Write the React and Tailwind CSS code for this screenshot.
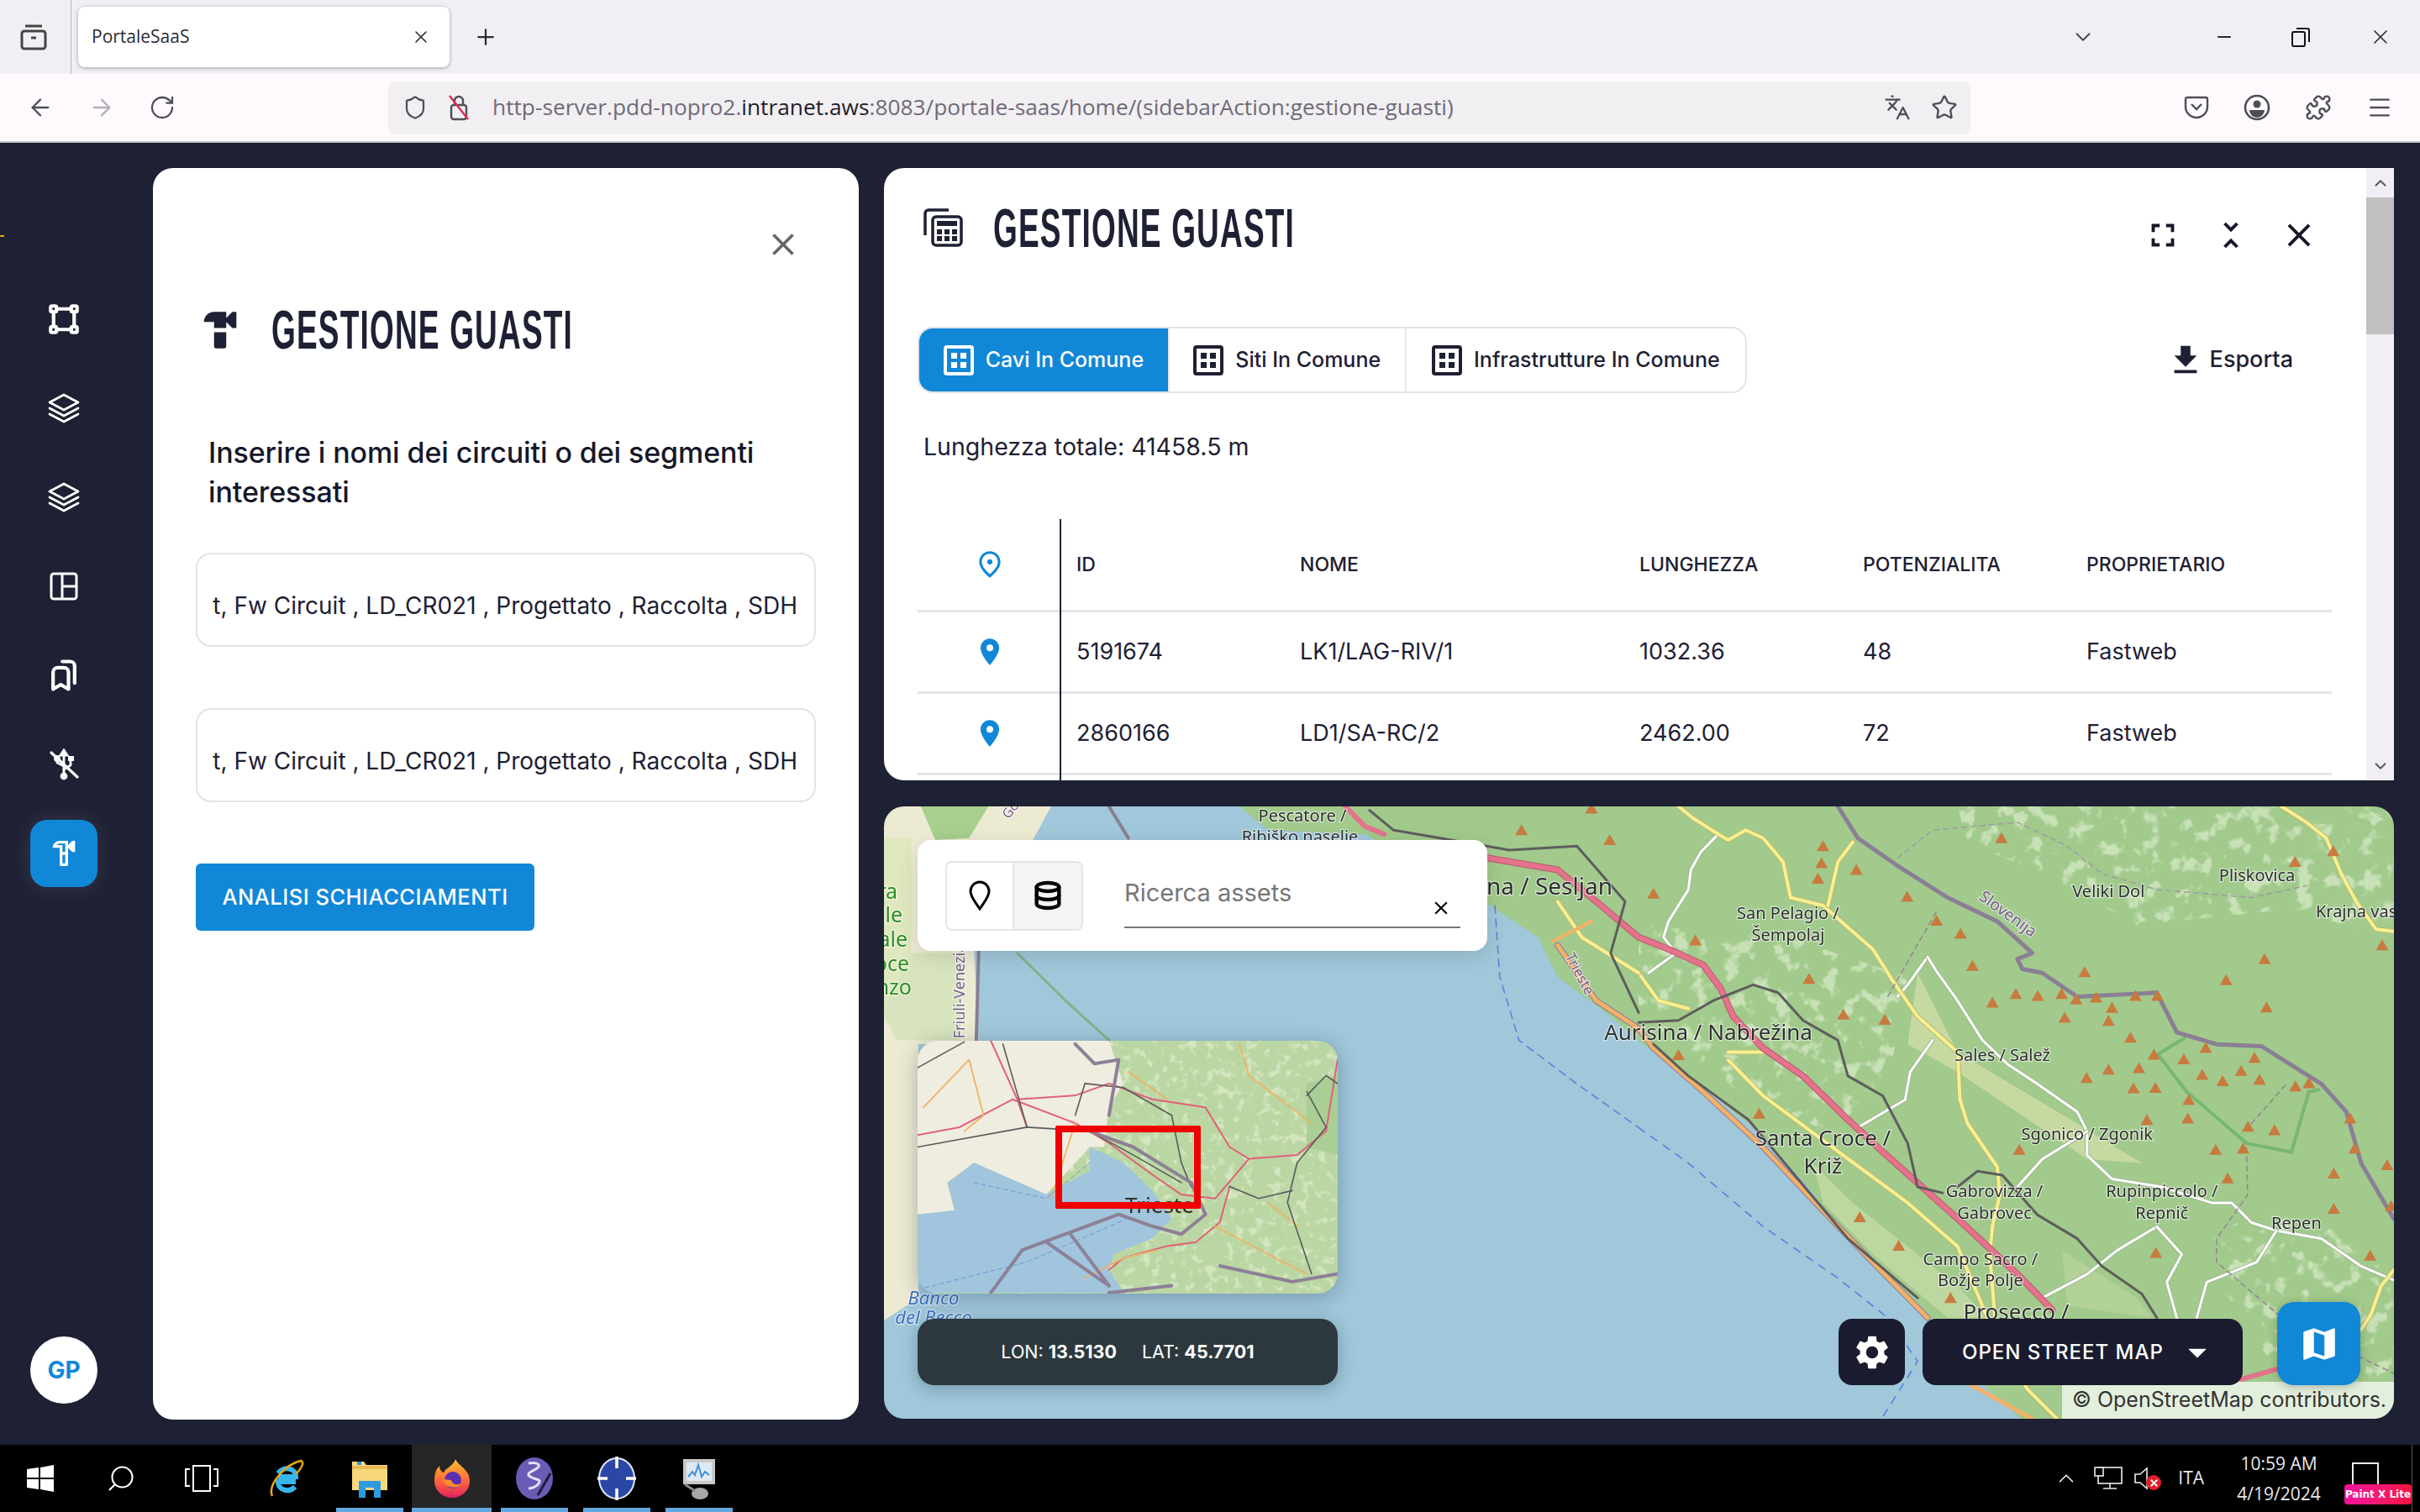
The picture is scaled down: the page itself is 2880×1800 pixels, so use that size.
import {
  MdHardware, MdOutlineHardware, MdClose, MdFullscreen, MdUnfoldLess, MdFileDownload, MdPlace, MdOutlinePlace,
  MdSettings, MdMap, MdArrowDropDown,
} from 'react-icons/md';
import { TbVector, TbBookmarks, TbDatabase } from 'react-icons/tb';
import { ArrowLeft, ArrowRight, RotateCw, Shield, Star, Puzzle, Menu, Languages, Plus, X, ChevronDown, Minus, Search, ChevronUp } from 'lucide-react';

// map drawing helpers: points are read off the zoomed crops and scaled back to map pixels
const conv = (s, ox, sx, oy = 0, sy = 2.119) =>
  s.trim().split(/\s+/).map((p) => {
    const [x, y] = p.split(',').map(Number);
    return `${(ox + x / sx).toFixed(1)},${(oy + y / sy).toFixed(1)}`;
  }).join(' ');
const z6 = (s) => conv(s, 898, 1.686);
const z5 = (s) => conv(s, -2, 1.742);
const mm = (s) => conv(s, -42, 1.742, -279.4);

const triangles = '728,80 370,100 367,143 437,160 360,182 30,220 539,228 1317,140 1394,113 598,288 646,321 114,338 1492,350 670,402 895,418 1256,385 1179,438 342,435 757,473 801,478 849,473 710,495 878,487 918,482 997,478 1041,478 950,508 1260,507 855,533 943,541 411,525 494,538 987,583 1138,609 1034,626 1094,638 1236,634 80,627 1004,660 943,664 899,685 1131,677 1209,667 1172,693 1246,689 993,711 1037,710 1318,706 1345,698 1104,740 1102,787 1020,791 1428,787 242,775 1223,808 1276,817 764,866 1158,866 1213,863 1437,863 1502,905 1395,926 1182,938 1395,1015 1510,1008 444,1036 522,1108 1038,1126 1468,1133 626,1240';

const labels = [
  ['Pliskovica', 1241, 178, 20], ['Veliki Dol', 943, 218, 20], ['Krajna vas', 1440, 268, 20],
  ['San Pelagio /', 300, 273, 20], ['Šempolaj', 300, 327, 20],
  ['Sales / Salež', 730, 631, 20], ['Santa Croce /', 370, 842, 26], ['Križ', 370, 912, 26],
  ['Sgonico / Zgonik', 900, 830, 20], ['Gabrovizza /', 714, 975, 20], ['Gabrovec', 714, 1030, 20],
  ['Rupinpiccolo /', 1050, 975, 20], ['Repnič', 1050, 1030, 20], ['Repen', 1320, 1055, 20],
  ['Campo Sacro /', 686, 1145, 20], ['Božje Polje', 686, 1198, 20], ['Prosecco /', 758, 1280, 26],
];

const Line = ({ pts, color, w, casing, dash }) => (
  <>
    {casing && <polyline points={pts} fill="none" stroke={casing} strokeWidth={w + 2} strokeLinejoin="round" strokeLinecap="round" />}
    <polyline points={pts} fill="none" stroke={color} strokeWidth={w} strokeLinejoin="round" strokeLinecap="round" strokeDasharray={dash} />
  </>
);

const Label = ({ x, y, size, children, fill = '#2f2f2f', anchor = 'middle', ...rest }) => (
  <text x={x} y={y} fontSize={size} fill={fill} textAnchor={anchor} stroke="#ffffff" strokeOpacity="0.55" strokeWidth="2.5" paintOrder="stroke" fontFamily="'Noto Sans', sans-serif" dominantBaseline="middle" {...rest}>
    {children}
  </text>
);

// mottled woodland texture for the land areas
const Mottle = ({ id, freq, seed, cut }) => (
  <filter id={id} x="0" y="0" width="100%" height="100%">
    <feTurbulence type="fractalNoise" baseFrequency={freq} numOctaves="3" seed={seed} />
    <feColorMatrix type="matrix" values={`0 0 0 0 0.78  0 0 0 0 0.88  0 0 0 0 0.66  0 0 0 ${cut} ${-cut * 0.55}`} />
  </filter>
);

const MapCanvas = () => (
  <svg className="absolute inset-0 block blur-[0.5px]" width="1797" height="729" viewBox="0 0 1797 729">
    <defs>
      <Mottle id="mottle" freq="0.05" seed="4" cut="7" />
      <clipPath id="woods">
        <path d={`M${z6('640,0 1515,0 1515,330 1300,260 1000,300 830,180 660,90')}Z M${z6('1150,1060 1350,1030 1515,1180 1515,1450 1300,1450 1180,1250')}Z M${z6('0,300 300,330 540,430 500,700 380,820 200,720 0,520')}Z`} />
      </clipPath>
    </defs>
    <rect width="1797" height="729" fill="#a1ca8c" />
    <rect width="1797" height="729" filter="url(#mottle)" clipPath="url(#woods)" opacity="0.6" />
    {/* left plain and lagoon */}
    <polygon points={z5('0,0 350,0 350,400 200,600 75,600 75,1240 0,1300')} fill="#ecead3" />
    <polygon points={z5('80,0 220,0 180,80 110,85')} fill="#a8cf8e" />
    <polygon points={z5('0,80 60,80 60,380 0,520')} fill="#dfe7c0" />
    <polygon points={z5('60,370 170,370 160,590 30,590 0,520')} fill="#d8e4bd" />
    {/* lighter fields */}
    <polygon points={z6('560,420 640,620 880,800 1010,900 900,890 640,670 540,600')} fill="#c6d9a0" />
    <polygon points={z6('350,900 430,1000 640,1210 700,1290 620,1290 470,1130 370,1000')} fill="#bcd79f" />
    <polygon points={z6('850,1120 1000,1240 1030,1290 860,1260')} fill="#b2d29a" />
    {/* sea */}
    <polygon points={`${z5('350,0 740,0 800,60 1000,70 1260,250 1360,330 1400,430 1500,520')} ${z6('0,590 50,640 120,700 230,810 340,960 400,1060 500,1200 580,1290 640,1400 780,1560')} ${z5('0,1560 0,1300 75,1240 75,600 200,600 190,360')}`} fill="#a0c7da" />
    {/* sea borders */}
    <Line pts={z5('1270,250 1280,430 1320,590 1440,700 1568,810')} color="#5b7fd6" w={1.5} dash="9 7" />
    <Line pts={z6('0,810 100,900 250,1060 400,1190 500,1290 560,1400 490,1540')} color="#4f7fdd" w={1.5} dash="9 9" />
    <Line pts={z5('280,370 380,490 470,590')} color="#7fb48a" w={3} />
    <Line pts={z5('470,0 510,80')} color="#8a7f95" w={4} />
    <Line pts={z5('200,360 195,590')} color="#8a7f95" w={4} />
    {/* orange coast road */}
    <Line pts={`${z5('1400,350 1480,490 1568,560')} ${z6('30,610 130,720 250,860 370,1020 470,1150 580,1290')}`} color="#f3b166" w={5} casing="#8d7aa0" />
    <Line pts={z6('640,1440 790,1545')} color="#f3b166" w={5} />
    {/* white roads */}
    {['160,70 125,115 105,160 100,210 60,290 50,330 75,370 20,420',
      '580,380 540,450 520,480', '580,380 600,420 640,490 690,590 740,650 800,700 880,770 900,820 900,880 950,940 1050,960 1150,1000 1190,1000 1230,1050 1280,1070 1370,1090 1450,1160 1515,1195',
      '590,590 545,670 535,740 440,810', '900,820 810,890 760,960', '1040,1060 960,1120 900,1180 810,1240',
      '1040,1060 1090,1130 1060,1200 1080,1290', '1280,1070 1240,1150 1140,1200 1120,1290'].map((p) => (
      <Line key={p} pts={z6(p)} color="#ffffff" w={3} casing="#9fb88f" />
    ))}
    {/* yellow roads */}
    {['80,0 110,30 160,70 180,85 215,60 250,80 290,140 305,230 370,250 470,360 510,440 560,530 640,620 645,740 660,800 720,910 725,980 710,1060 705,1130 715,1290',
      '430,90 400,140 380,250', '0,420 40,490 100,510', '180,620 250,620', '180,640 250,730 400,870 540,1000 640,1110 700,1290 780,1470 840,1545',
      '1290,0 1340,40 1380,80 1410,170 1440,240 1480,310 1515,315', '1515,1170 1490,1210 1470,1280 1450,1320'].map((p) => (
      <Line key={p} pts={z6(p)} color="#f6f08f" w={4} casing="#b9b873" />
    ))}
    <Line pts={z5('1400,240 1450,330 1568,420')} color="#f6f08f" w={4} casing="#b9b873" />
    <Line pts={z5('1390,340 1470,290')} color="#f3b166" w={4} />
    {/* motorway */}
    <Line pts={`${z5('1254,130 1400,160 1490,250 1568,330')} ${z6('0,330 60,360 130,400 165,460 190,530 250,610 330,680 420,790 480,860 560,950 640,1040 700,1110 760,1180 830,1270')}`} color="#e4738b" w={6} casing="#b85a6e" />
    <Line pts={z6('1210,1445 1280,1420')} color="#e4738b" w={6} />
    <Line pts={z5('960,0 1000,50 1040,70')} color="#e4738b" w={6} />
    {/* railways */}
    {['0,545 80,540 150,490 230,450 280,470 330,540 400,590 420,680 490,730 540,850 560,960 610,975',
      '640,960 680,920 730,930 800,1030 880,1090 930,1160 1010,1230 1040,1290', '30,600 100,680 220,790 340,970 420,1090 560,1240'].map((p) => (
      <Line key={p} pts={z6(p)} color="#5d5d5d" w={3} />
    ))}
    <Line pts={z5('1010,10 1060,60 1300,110 1440,100 1540,240 1510,370 1568,520')} color="#5d5d5d" w={3} />
    {/* park and border */}
    <Line pts={z6('1095,585 1042,625 1100,720 1220,850 1310,872 1345,720 1365,715')} color="#78b673" w={4} />
    <Line pts={z6('400,0 440,80 520,150 620,230 720,290 790,370 760,385 770,410 810,420 880,480 1040,470 1080,570 1160,600 1250,605 1370,700 1420,770 1450,900 1515,1040')} color="#8a7f95" w={5} />
    <Line pts={z6('520,130 590,60 760,40 860,100 930,170 1040,210 1230,230 1340,200')} color="#9f9aa0" w={1.5} dash="6 5" />
    <Line pts={z6('1220,860 1222,980 1160,1090 1160,1150 1300,1300 1515,1430')} color="#96848f" w={1.5} dash="6 5" />
    <Line pts={z6('500,480 600,260')} color="#96848f" w={1.5} dash="6 5" />
    <Line pts={z6('1230,800 1300,700')} color="#96848f" w={1.5} dash="6 5" />
    {/* peaks */}
    {triangles.split(' ').map((p) => {
      const [x, y] = p.split(',').map(Number);
      const cx = 898 + x / 1.686;
      const cy = y / 2.119;
      return <polygon key={p} points={`${cx},${cy - 7} ${cx + 7.5},${cy + 6} ${cx - 7.5},${cy + 6}`} fill="#c97a3f" />;
    })}
    {z5('1325,60 1508,85 1470,5').split(' ').map((p) => {
      const [cx, cy] = p.split(',').map(Number);
      return <polygon key={p} points={`${cx},${cy - 7} ${cx + 7.5},${cy + 6} ${cx - 7.5},${cy + 6}`} fill="#c97a3f" />;
    })}
    {labels.map(([t, x, y, s]) => (
      <Label key={t} x={898 + x / 1.686} y={y / 2.119} size={s}>{t}</Label>
    ))}
    <Label x={981} y={271} size={26}>Aurisina / Nabrežina</Label>
    <Label x={867} y={97} size={28} anchor="end">Sistiana / Sesljan</Label>
    <Label x={498} y={13} size={20}>Pescatore /</Label>
    <Label x={495} y={38} size={20}>Ribiško naselje</Label>
    <Label x={1337} y={129} size={19} fill="#7a5c8f" transform="rotate(36 1337 129)">Slovenija</Label>
    <Label x={827} y={200} size={17} fill="#7a5c8f" transform="rotate(62 827 200)">Trieste</Label>
    <Label x={91} y={220} size={18} fill="#7a5c8f" transform="rotate(-90 91 220)">Friuli-Venezia</Label>
    <Label x={158} y={0} size={16} fill="#7a5c8f" anchor="start" transform="rotate(-52 165 20)">Gorizia</Label>
    {[['ra', 103], ['ile', 131], ['ale', 160], ['oce', 189], ['nzo', 217]].map(([t, y], i) => (
      <Label key={t} x={[16, 22, 28, 30, 33][i]} y={y} size={25} fill="#2c8f22" anchor="end">{t}</Label>
    ))}
    <Label x={59} y={587} size={22} fill="#3f72c0" fontStyle="italic">Banco</Label>
    <Label x={59} y={610} size={22} fill="#3f72c0" fontStyle="italic">del Becco</Label>
  </svg>
);

const MiniMap = () => (
  <svg width="500" height="301" viewBox="0 0 500 301" className="block blur-[0.4px]">
    <defs><Mottle id="mottle2" freq="0.09" seed="9" cut="6" /></defs>
    <rect width="500" height="301" fill="#bad6a2" />
    <rect width="500" height="301" filter="url(#mottle2)" opacity="0.6" />
    <polygon points={mm('73,592 470,592 500,700 470,760 460,860 430,860 340,980 190,900 135,950 150,1020 73,1030')} fill="#efece0" />
    <polygon points={mm('73,1030 150,1020 135,950 190,900 340,980 430,920 430,860 500,900 560,970 600,1040 560,1090 480,1130 470,1170 500,1228 73,1228')} fill="#a0c5dc" />
    <polygon points={mm('880,700 944,680 944,880 880,860')} fill="#a9cf95" />
    {['225,592 280,740 300,810', '73,830 160,810 270,740 400,800 470,850 560,930 620,980 690,990 760,890 860,880 920,820 944,640',
      '280,740 400,730 470,700 560,740 670,760 720,860 760,890', '720,960 700,1050 650,1100 590,1110 500,1140 470,1170'].map((p) => (
      <Line key={p} pts={mm(p)} color="#e0607a" w={2} />
    ))}
    {['85,760 180,640 210,780 170,820', '400,800 350,990', '510,670 590,740', '740,600 760,680 890,800', '690,1060 830,1150 880,1180', '800,1000 860,1060', '420,1190 500,1140 570,1120'].map((p) => (
      <Line key={p} pts={mm(p)} color="#eeb366" w={1.8} />
    ))}
    {['73,660 170,595', '250,600 300,810 73,860', '300,810 430,820 520,880 620,950', '400,780 420,700 500,710 600,780 620,900 640,960', '880,730 920,680 944,700', '880,720 920,810 860,900 840,1000 890,1180', '720,960 780,990 850,970'].map((p) => (
      <Line key={p} pts={mm(p)} color="#5a5a5a" w={1.6} />
    ))}
    {['400,600 440,650 490,640 470,780', '430,820 520,860 640,950 670,1030 620,1080 560,1060 490,1030 290,1120 225,1228', '340,1100 470,1210', '390,1080 470,1210', '700,1160 850,1200 944,1180', '470,1228 600,1210'].map((p) => (
      <Line key={p} pts={mm(p)} color="#8d8096" w={4} />
    ))}
    <Line pts={mm('190,950 340,990 430,900')} color="#6a95dc" w={1} dash="5 4" />
    <Line pts={mm('73,1220 300,1150 510,1040')} color="#6a95dc" w={1} dash="5 4" />
    <text x="288" y="205" fontSize="26" fill="#2e2e2e" textAnchor="middle" fontFamily="'Noto Sans', sans-serif">Trieste</text>
  </svg>
);

const GridIcon = ({ className }) => (
  <svg className={className} viewBox="0 0 36 36" fill="none">
    <rect x="2" y="2" width="32" height="32" rx="2" stroke="currentColor" strokeWidth="4" />
    <rect x="9" y="9" width="7" height="7" fill="currentColor" />
    <rect x="20" y="9" width="7" height="7" fill="currentColor" />
    <rect x="9" y="20" width="7" height="7" fill="currentColor" />
    <rect x="20" y="20" width="7" height="7" fill="currentColor" />
  </svg>
);

const CalcStack = () => (
  <svg width="47" height="46" viewBox="0 0 47 46" fill="none" className="text-[#1e2033]">
    <path d="M30 2H6a4 4 0 0 0-4 4v26" stroke="currentColor" strokeWidth="3.5" />
    <rect x="11" y="10" width="34" height="34" rx="4" stroke="currentColor" strokeWidth="3.5" />
    <rect x="16" y="15" width="24" height="6" fill="currentColor" />
    {[16, 25, 34].map((x) => [25, 33].map((y) => <rect key={`${x}${y}`} x={x} y={y} width="6" height="6" fill="currentColor" />))}
  </svg>
);

const LayersIcon = () => (
  <svg width="38" height="36" viewBox="0 0 38 36" fill="none" stroke="currentColor" strokeWidth="2.8" strokeLinejoin="round" strokeLinecap="round">
    <path d="M19 2 36 11 19 20 2 11Z" />
    <path d="M2 18 19 27 36 18" />
    <path d="M2 25 19 34 36 25" />
  </svg>
);

const PanelIcon = () => (
  <svg width="34" height="34" viewBox="0 0 34 34" fill="none" stroke="currentColor" strokeWidth="3" strokeLinejoin="round">
    <rect x="2" y="2" width="30" height="30" rx="3" />
    <path d="M15 2v30M15 17h17" />
  </svg>
);

const UsbOffIcon = () => (
  <svg width="36" height="38" viewBox="0 0 36 38" fill="none" stroke="currentColor" strokeWidth="2.8" strokeLinecap="round">
    <path d="M3 5 34 34" strokeWidth="3.2" />
    <path d="M18 8v24" />
    <path d="M18 2l4 6h-8Z" fill="currentColor" />
    <circle cx="18" cy="33" r="3" fill="currentColor" />
    <path d="M18 25l8-5v-5M18 21l-8-4v-3" />
    <rect x="23" y="9" width="7" height="6" fill="currentColor" stroke="none" />
    <circle cx="10" cy="12" r="2.5" fill="currentColor" />
  </svg>
);

const sidebarIcons = [
  <TbVector size={42} strokeWidth={2.4} />,
  <LayersIcon />,
  <LayersIcon />,
  <PanelIcon />,
  <TbBookmarks size={44} strokeWidth={2.3} />,
  <UsbOffIcon />,
];

const Sidebar = () => (
  <div className="relative w-[182px] shrink-0 flex flex-col items-center pt-[157px] pb-[49px] pr-[30px]">
    <div className="absolute left-0 top-[110px] h-[2px] w-[5px] bg-[#e8a317]" />
    {sidebarIcons.map((icon, i) => (
      <div key={i} className="h-[106px] w-full flex items-center justify-center text-white">{icon}</div>
    ))}
    <div className="h-[106px] flex items-center">
      <div className="w-[80px] h-[80px] rounded-[20px] bg-[#1187d8] flex items-center justify-center text-white shadow-[0_0_24px_rgba(255,255,255,0.12)]">
        <MdOutlineHardware size={40} />
      </div>
    </div>
    <div className="mt-auto w-[80px] h-[80px] rounded-full bg-white flex items-center justify-center text-[#1187d8] font-bold text-[28px]">GP</div>
  </div>
);

const fieldText = 't, Fw Circuit , LD_CR021 , Progettato , Raccolta , SDH';
const headingCls = "text-[50px] font-bold leading-none tracking-[1.6px] origin-left scale-x-[0.74] scale-y-[1.28] whitespace-nowrap font-['Liberation_Sans_Narrow','Liberation_Sans',sans-serif]";

const LeftPanel = () => (
  <div className="w-[840px] shrink-0 my-[30px] bg-white rounded-[24px] pt-[69px] pl-[51px] pr-[51px] flex flex-col text-[#1e2033]">
    <div className="flex justify-end pr-[17px] text-[#666]">
      <MdClose size={44} />
    </div>
    <div className="mt-[50px] flex items-center gap-[32px] pl-[6px] h-[60px]">
      <MdHardware size={58} className="-ml-[6px] text-[#1e2033]" />
      <h1 className={headingCls}>GESTIONE GUASTI</h1>
    </div>
    <p className="mt-[92px] pl-[15px] text-[34px] leading-[47px] font-medium text-[#16172a] tracking-[-0.1px]">Inserire i nomi dei circuiti o dei segmenti interessati</p>
    <div className="mt-[49px] h-[112px] rounded-[18px] border-2 border-[#e4e2e8] flex items-center justify-end pr-[20px] pt-[14px] text-[28px] text-[#1e2033] whitespace-nowrap overflow-hidden">{fieldText}</div>
    <div className="mt-[73px] h-[112px] rounded-[18px] border-2 border-[#e4e2e8] flex items-center justify-end pr-[20px] pt-[14px] text-[28px] text-[#1e2033] whitespace-nowrap overflow-hidden">{fieldText}</div>
    <button className="mt-[73px] w-[403px] h-[80px] rounded-[6px] bg-[#1187d8] text-white text-[25.5px] font-medium tracking-[0.5px] text-center">ANALISI SCHIACCIAMENTI</button>
  </div>
);

const tabs = [
  { label: 'Cavi In Comune', w: 'w-[299px]', active: true },
  { label: 'Siti In Comune', w: 'w-[283px]' },
  { label: 'Infrastrutture In Comune', w: 'w-[405px]' },
];

const columns = ['w-[169px]', 'w-[266px]', 'w-[404px]', 'w-[266px]', 'w-[266px]', 'w-[312px]'];
const rows = [
  ['5191674', 'LK1/LAG-RIV/1', '1032.36', '48', 'Fastweb'],
  ['2860166', 'LD1/SA-RC/2', '2462.00', '72', 'Fastweb'],
];

const TableRow = ({ h, icon, cells, className }) => (
  <div className={`flex items-center border-b-[3px] border-[#e6e3ea] ${h} ${className}`}>
    <div className={`${columns[0]} flex justify-center pl-[3px] text-[#1187d8]`}>{icon}</div>
    {cells.map((c, i) => (
      <div key={i} className={`${columns[i + 1]} pl-[20px]`}>{c}</div>
    ))}
  </div>
);

const TopPanel = () => (
  <div className="h-[729px] bg-white rounded-l-[24px] flex overflow-hidden text-[#1e2033]">
    <div className="flex-1 min-w-0 flex flex-col pl-[40px] pr-[40px]">
      <div className="mt-[46px] flex items-start">
        <div className="pl-[7px] pt-[2px]"><CalcStack /></div>
        <h2 className={`ml-[36px] mt-[1px] ${headingCls}`}>GESTIONE GUASTI</h2>
        <div className="ml-auto mr-[17px] mt-[11px] flex items-center gap-[35px] text-[#16172a]">
          <MdFullscreen size={46} />
          <MdUnfoldLess size={46} />
          <MdClose size={46} />
        </div>
      </div>
      <div className="mt-[86px] flex items-center">
        <div className="flex h-[79px] w-[987px] rounded-[18px] border-2 border-[#e4e2e8] overflow-hidden">
          {tabs.map((t, i) => (
            <div key={t.label} className={`${t.w} flex items-center justify-center gap-[14px] text-[25px] font-medium ${t.active ? 'bg-[#1187d8] text-white' : ''} ${i === 2 ? '' : 'border-r-2 border-[#e8e6ec]'}`}>
              <GridIcon className="w-[36px] h-[36px] shrink-0" />
              <span className="whitespace-nowrap">{t.label}</span>
            </div>
          ))}
        </div>
        <div className="ml-auto mr-[47px] flex items-center gap-[6px] text-[27px] font-medium">
          <MdFileDownload size={46} />
          Esporta
        </div>
      </div>
      <p className="mt-[45px] pl-[7px] text-[28.5px] leading-[38px]">Lunghezza totale: 41458.5 m</p>
      <div className="relative mt-[67px] w-[1683px] shrink-0">
        <div className="absolute left-[169px] top-0 h-[400px] w-[2px] bg-[#1e2033]" />
        <TableRow h="h-[111px]" className="text-[23px] font-medium" icon={<MdOutlinePlace size={38} />} cells={['ID', 'NOME', 'LUNGHEZZA', 'POTENZIALITA', 'PROPRIETARIO']} />
        {rows.map((r) => (
          <TableRow key={r[0]} h="h-[97px]" className="text-[27px]" icon={<MdPlace size={38} />} cells={r} />
        ))}
      </div>
    </div>
    <div className="w-[33px] shrink-0 bg-[#f1eff5] flex flex-col items-center text-[#555]">
      <div className="h-[35px] flex items-center justify-center"><ChevronUp size={22} /></div>
      <div className="h-[163px] w-full bg-[#c0c0c0]" />
      <div className="mt-auto h-[28px] flex items-start justify-center"><ChevronDown size={22} /></div>
    </div>
  </div>
);

const MapPanel = () => (
  <div className="relative h-[729px] rounded-[24px] overflow-hidden">
    <MapCanvas />
    <div className="absolute left-[40px] top-[40px] w-[678px] h-[132px] bg-white rounded-[16px] flex items-center pl-[33px] pr-[32px] shadow-[0_6px_24px_rgba(0,0,0,0.12)]">
      <div className="flex h-[83px] w-[164px] rounded-[8px] border-2 border-[#e6e4ea] overflow-hidden">
        <div className="w-1/2 flex items-center justify-center border-r-2 border-[#e6e4ea] text-black">
          <svg width="32" height="36" viewBox="0 0 32 36" fill="none"><path d="M16 34C11 26 5 20 5 13a11 11 0 0 1 22 0c0 7-6 13-11 21Z" stroke="currentColor" strokeWidth="3" /></svg>
        </div>
        <div className="w-1/2 flex items-center justify-center bg-[#f4f4f4] text-black"><TbDatabase size={40} strokeWidth={2.6} /></div>
      </div>
      <div className="ml-[49px] flex-1 h-[81px] mb-[4px] border-b-2 border-[#777] flex items-center justify-between">
        <span className="text-[29px] text-[#777]">Ricerca assets</span>
        <MdClose size={26} className="text-black mr-[10px] mt-[36px]" />
      </div>
    </div>
    <div className="absolute left-[40px] top-[279px] w-[500px] h-[301px] rounded-[24px] overflow-hidden shadow-[0_4px_24px_rgba(20,40,70,0.3)]">
      <MiniMap />
      <div className="absolute left-[164px] top-[101px] w-[173px] h-[99px] border-[8px] border-[#f00000] rounded-[2px]" />
    </div>
    <div className="absolute left-[40px] top-[610px] w-[500px] h-[79px] rounded-[20px] bg-[#2c383e] flex items-center justify-center gap-[30px] text-white text-[21.5px] shadow-[0_4px_20px_rgba(20,40,70,0.3)]">
      <span>LON: <b>13.5130</b></span>
      <span>LAT: <b>45.7701</b></span>
    </div>
    <div className="absolute right-0 bottom-0 w-[395px] h-[44px] bg-white/70 flex items-center pl-[12px] text-[25px] text-[#333] whitespace-nowrap">© OpenStreetMap contributors.</div>
    <div className="absolute left-[1136px] top-[590px] flex items-end">
      <div className="w-[79px] h-[79px] rounded-[16px] bg-[#1a1b2e] flex items-center justify-center text-white"><MdSettings size={48} /></div>
      <div className="ml-[21px] w-[381px] h-[79px] rounded-[16px] bg-[#1a1b2e] flex items-center pl-[47px] text-white text-[24px] font-medium tracking-[1px] whitespace-nowrap">
        OPEN STREET MAP
        <MdArrowDropDown size={52} className="ml-[14px]" />
      </div>
      <div className="ml-[41px] w-[99px] h-[99px] rounded-[20px] bg-[#1187d8] flex items-center justify-center text-white shadow-[0_2px_12px_rgba(0,0,0,0.25)]"><MdMap size={50} /></div>
    </div>
  </div>
);

const TitleBar = () => (
  <div className="h-[88px] bg-[#f1eff4] flex items-center text-[#2b2a33] shrink-0 font-['Open_Sans',sans-serif]">
    <div className="w-[85px] h-full border-r border-[#b9b7bd] flex items-center justify-center pr-[4px]">
      <svg width="32" height="32" viewBox="0 0 32 32" fill="none" stroke="#444" strokeWidth="3"><path d="M6 3h20" /><rect x="2" y="9" width="28" height="21" rx="3" /><path d="M13 17h6" /></svg>
    </div>
    <div className="ml-[8px] w-[442px] h-[72px] bg-white rounded-[8px] shadow-[0_1px_4px_rgba(0,0,0,0.35)] flex items-center pl-[16px] pr-[22px] justify-between text-[21px]">
      <span>PortaleSaaS</span>
      <X size={24} strokeWidth={1.6} />
    </div>
    <Plus size={30} strokeWidth={1.8} className="ml-[28px]" />
    <div className="ml-auto flex items-center">
      <ChevronDown size={30} strokeWidth={1.6} className="text-[#4a4a55] mr-[141px]" />
      <Minus size={24} strokeWidth={2} className="mr-[68px]" />
      <svg width="22" height="24" viewBox="0 0 22 24" fill="none" stroke="#111" strokeWidth="2" className="mr-[70px]"><rect x="1" y="6" width="15" height="17" rx="2" /><path d="M6 2h13a2 2 0 0 1 2 2v14" /></svg>
      <X size={28} strokeWidth={1.4} className="mr-[33px]" />
    </div>
  </div>
);

const iconCls = 'text-[#4f4e57]';

const NavBar = () => (
  <div className="h-[82px] bg-[#fdf9fd] border-b-2 border-[#c4c3c8] flex items-center shrink-0 font-['Open_Sans',sans-serif]">
    <ArrowLeft size={32} strokeWidth={1.7} className={`ml-[32px] ${iconCls}`} />
    <ArrowRight size={32} strokeWidth={1.7} className="ml-[41px] text-[#b0afb5]" />
    <RotateCw size={32} strokeWidth={1.7} className={`ml-[40px] ${iconCls}`} />
    <div className="ml-[253px] w-[1883px] h-[63px] bg-[#f1eff2] rounded-[8px] flex items-center pl-[17px] pr-[15px]">
      <Shield size={30} strokeWidth={1.8} className={iconCls} />
      <svg width="30" height="34" viewBox="0 0 30 34" fill="none" className="ml-[22px]">
        <rect x="6" y="14" width="18" height="17" rx="3" stroke="#4f4e57" strokeWidth="2.4" />
        <path d="M10 14V9a5 5 0 0 1 10 0v5" stroke="#4f4e57" strokeWidth="2.4" />
        <path d="M4 3l22 28" stroke="#e22850" strokeWidth="2.4" />
      </svg>
      <div className="ml-[25px] text-[26.3px] text-[#6f6a78] whitespace-nowrap">
        http-server.pdd-nopro2.<span className="text-[#1e1d2b]">intranet.aws</span>:8083/portale-saas/home/(sidebarAction:gestione-guasti)
      </div>
      <div className="ml-auto flex items-center gap-[24px]">
        <Languages size={32} strokeWidth={1.7} className={iconCls} />
        <Star size={32} strokeWidth={1.8} className={iconCls} />
      </div>
    </div>
    <div className="ml-auto flex items-center gap-[41px] pr-[32px]">
      <svg width="30" height="30" viewBox="0 0 30 30" fill="none" stroke="#4f4e57" strokeWidth="2.4"><path d="M2 5a2 2 0 0 1 2-2h22a2 2 0 0 1 2 2v9a13 13 0 0 1-26 0Z" /><path d="M9 11l6 6 6-6" /></svg>
      <svg width="32" height="32" viewBox="0 0 32 32" fill="none"><circle cx="16" cy="16" r="14" stroke="#4f4e57" strokeWidth="2.6" /><circle cx="16" cy="12" r="4.5" fill="#4f4e57" /><path d="M7 19h18a9 9 0 0 1-18 0Z" fill="#4f4e57" /></svg>
      <Puzzle size={32} strokeWidth={1.8} className={iconCls} />
      <Menu size={32} strokeWidth={1.8} className={iconCls} />
    </div>
  </div>
);

const Underline = () => <div className="absolute left-0 right-0 bottom-0 h-[5px] bg-[#63a8e0]" />;

const Taskbar = () => (
  <div className="relative h-[80px] bg-black flex items-center text-white shrink-0 font-['Open_Sans',sans-serif]">
    <div className="w-[96px] flex justify-center">
      <svg width="32" height="32" viewBox="0 0 32 32" fill="#fff"><path d="M0 5l14-2v12H0ZM16 3l16-3v15H16ZM0 17h14v12L0 27ZM16 17h16v15l-16-3Z" /></svg>
    </div>
    <div className="w-[96px] flex justify-center">
      <Search size={36} strokeWidth={1.4} className="-scale-x-100" />
    </div>
    <div className="w-[96px] flex justify-center">
      <svg width="40" height="32" viewBox="0 0 40 32" fill="none" stroke="#fff" strokeWidth="2"><rect x="10" y="1" width="20" height="30" /><path d="M6 5H1v20h5M34 5h5v20h-5" /></svg>
    </div>
    <div className="ml-[6px] w-[94px] h-full flex items-center justify-center">
      <svg width="46" height="46" viewBox="0 0 46 46" fill="none">
        <path d="M34 27H13c0 11 14 13 20 6M13 21h21c0-11-15-13-21-4" stroke="#36b5ee" strokeWidth="6" />
        <path d="M6 44C0 30 22 6 40 2c6 2-2 12-6 16" stroke="#e8a80f" strokeWidth="2.5" />
      </svg>
    </div>
    <div className="relative ml-[12px] w-[80px] h-full flex items-center justify-center">
      <svg width="42" height="46" viewBox="0 0 42 46">
        <path d="M0 3h14l3 4h25v30H0Z" fill="#f6d77c" /><rect x="0" y="8" width="42" height="4" fill="#e8bc52" /><rect x="6" y="3" width="5" height="4" fill="#3c8fd0" />
        <path d="M8 46V26h26v20h-8V34H16v12Z" fill="#2f9ae0" />
      </svg>
      <Underline />
    </div>
    <div className="relative ml-[10px] w-[95px] h-full bg-[#262626] flex items-center justify-center">
      <svg width="46" height="46" viewBox="0 0 46 46">
        <defs><linearGradient id="ff" x1="0" y1="0" x2="0" y2="1"><stop offset="0" stopColor="#ffc32e" /><stop offset="0.5" stopColor="#ff7139" /><stop offset="1" stopColor="#e3205f" /></linearGradient></defs>
        <path d="M27 0c3 8 17 12 17 26a21 20 0 0 1-42 0c0-6 1-13 6-18 0 4 2 7 5 8 3-6 12-8 14-16Z" fill="url(#ff)" />
        <circle cx="24" cy="25" r="10" fill="#5b2fb4" />
        <path d="M12 24c2 10 16 14 24 4-4 3-12 4-14-3Z" fill="#ff8a2b" />
      </svg>
      <Underline />
    </div>
    <div className="relative ml-[11px] w-[80px] h-full flex items-center justify-center">
      <svg width="46" height="52" viewBox="0 0 46 52">
        <ellipse cx="23" cy="26" rx="22" ry="25" fill="#6a5bb5" />
        <path d="M16 8c10-2 16 2 10 6s-14 6-8 10 14 2 10 8-12 6-12 6" fill="none" stroke="#e3e0f5" strokeWidth="3" />
        <path d="M27 46 42 20" stroke="#201c38" strokeWidth="3" />
      </svg>
      <Underline />
    </div>
    <div className="relative ml-[18px] w-[80px] h-full flex items-center justify-center">
      <svg width="46" height="52" viewBox="0 0 46 52">
        <ellipse cx="23" cy="26" rx="21" ry="24" fill="#2a47a8" stroke="#dfe6f5" strokeWidth="2" />
        <path d="M23 0v14M23 38v14M0 26h12M34 26h12" stroke="#fff" strokeWidth="3.5" />
      </svg>
      <Underline />
    </div>
    <div className="relative ml-[18px] w-[80px] h-full flex items-center justify-center">
      <svg width="46" height="52" viewBox="0 0 46 52">
        <rect x="4" y="3" width="38" height="30" fill="#c9c9c9" /><rect x="8" y="7" width="30" height="22" fill="#dfe9f5" />
        <path d="M10 24l5-6 3 4 4-12 4 14 4-6 5 4" fill="none" stroke="#3c8fd8" strokeWidth="2" />
        <ellipse cx="24" cy="44" rx="10" ry="7" fill="#a8a8a8" /><path d="M6 33l12 8" stroke="#888" strokeWidth="3" />
      </svg>
      <Underline />
    </div>
    <div className="ml-auto flex items-center text-[#e8e8e8]">
      <ChevronUp size={30} strokeWidth={1.4} className="mr-[18px]" />
      <svg width="34" height="28" viewBox="0 0 34 28" fill="none" stroke="#eee" strokeWidth="1.6" className="mr-[14px]"><rect x="5" y="1" width="28" height="19" /><path d="M19 20v5M11 26h16" /><rect x="1" y="1" width="10" height="10" fill="#000" /></svg>
      <div className="relative mr-[20px]">
        <svg width="32" height="28" viewBox="0 0 32 28" fill="none" stroke="#eee" strokeWidth="1.6"><path d="M1 9h6l8-7v24l-8-7H1Z" /></svg>
        <div className="absolute left-[14px] top-[10px] w-[18px] h-[18px] rounded-full bg-[#e01f2d] flex items-center justify-center"><X size={13} strokeWidth={3.5} className="text-white" /></div>
      </div>
      <span className="text-[21px] mr-[34px]">ITA</span>
      <div className="w-[110px] text-center text-[21px] leading-[36px] mr-[32px] whitespace-nowrap">
        <div>10:59 AM</div>
        <div>4/19/2024</div>
      </div>
      <div className="w-[32px] h-[28px] border-2 border-[#eee] mr-[49px] mb-[10px]" />
    </div>
    <div className="absolute right-[10px] top-[47px] w-[80px] h-[24px] rounded-[4px] bg-gradient-to-r from-[#f0109c] to-[#f8103c] flex items-center justify-center text-white text-[12px] font-bold font-['DejaVu_Sans',sans-serif] whitespace-nowrap">Paint X Lite</div>
    <div className="absolute right-[9px] top-0 bottom-0 w-px bg-[#555]" />
  </div>
);

export default function App() {
  return (
    <div className="w-[2880px] h-[1800px] flex flex-col overflow-hidden bg-[#1e2033] font-['Inter',sans-serif]">
      <TitleBar />
      <NavBar />
      <div className="flex-1 min-h-0 flex">
        <Sidebar />
        <LeftPanel />
        <div className="ml-[30px] w-[1797px] mt-[30px] flex flex-col gap-[31px]">
          <TopPanel />
          <MapPanel />
        </div>
      </div>
      <Taskbar />
    </div>
  );
}
